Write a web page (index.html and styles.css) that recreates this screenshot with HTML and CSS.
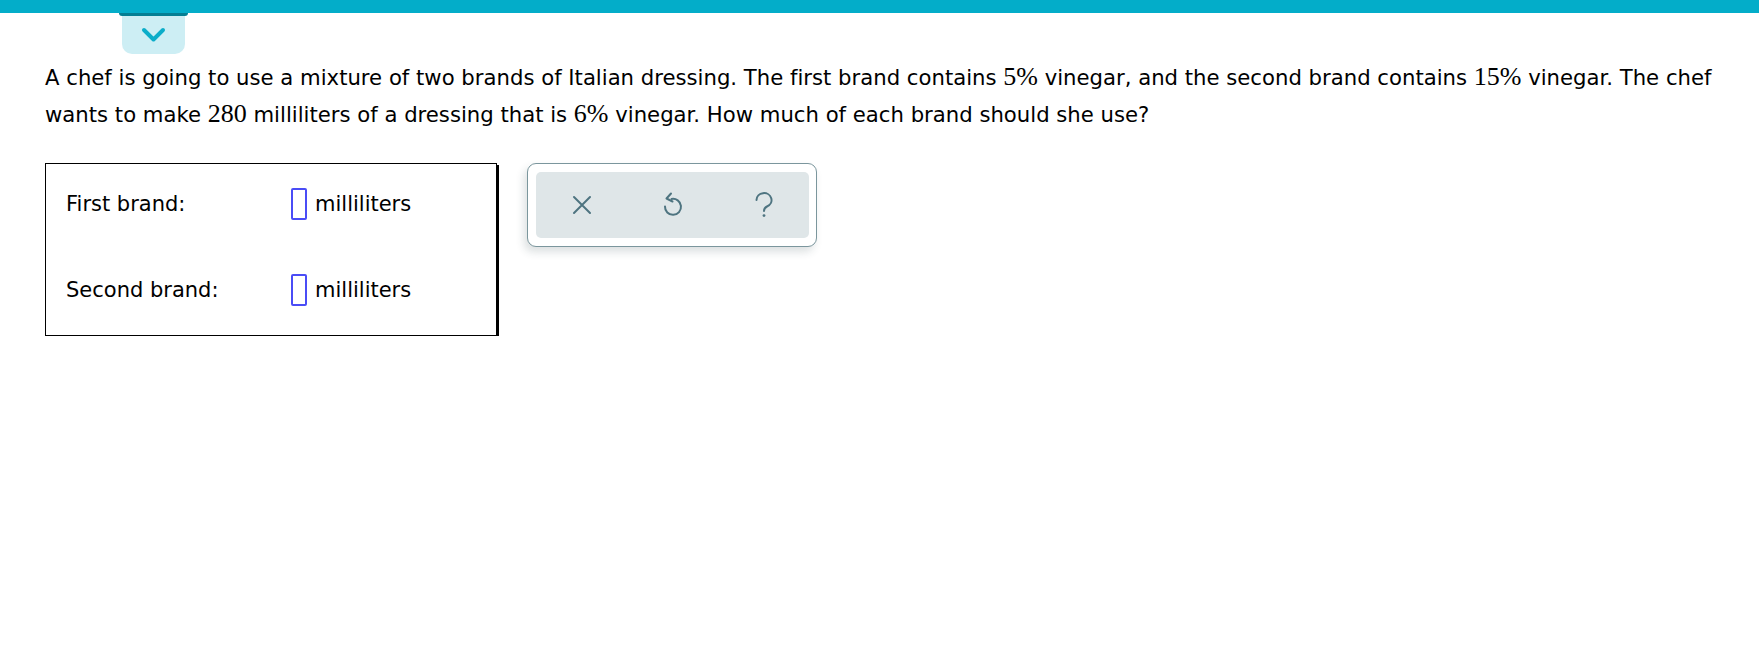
FILE: index.html
```html
<!DOCTYPE html>
<html lang="en">
<head>
<meta charset="utf-8">
<title>Mixture problem</title>
<link rel="stylesheet" href="styles.css">
</head>
<body>
<div class="topbar"></div>
<div class="tab-wrap">
  <div class="tab-lip"></div>
  <div class="tab">
    <svg class="chev" width="25" height="17" viewBox="0 0 25 17"><path d="M3 3 L12.5 12.5 L22 3" fill="none" stroke="#0badc9" stroke-width="4" stroke-linecap="round" stroke-linejoin="round"/></svg>
  </div>
</div>
<main class="content">
  <p class="question">A chef is going to use a mixture of two brands of Italian dressing. The first brand contains <span class="m">5%</span> vinegar, and the second brand contains <span class="m">15%</span> vinegar. The chef wants to make <span class="m">280</span> milliliters of a dressing that is <span class="m">6%</span> vinegar. How much of each brand should she use?</p>
  <div class="answer-area">
    <div class="answer-box">
      <div class="row">
        <span class="label">First brand:</span>
        <span class="input"></span>
        <span class="unit">milliliters</span>
      </div>
      <div class="row">
        <span class="label">Second brand:</span>
        <span class="input"></span>
        <span class="unit">milliliters</span>
      </div>
    </div>
    <div class="toolbar">
      <div class="toolbar-inner">
        <button class="tool" aria-label="Clear">
          <svg width="20" height="20" viewBox="0 0 20 20"><path d="M2 2 L18 18 M18 2 L2 18" fill="none" stroke="#4e7480" stroke-width="2" stroke-linecap="round"/></svg>
        </button>
        <button class="tool" aria-label="Undo">
          <svg width="22" height="26" viewBox="0 0 22 26"><path d="M9.5 7 A8 8 0 1 1 3 14.5" fill="none" stroke="#4e7480" stroke-width="2" stroke-linecap="round"/><path d="M9 1.5 L4.5 6.5 L10.5 9.5" fill="none" stroke="#4e7480" stroke-width="2" stroke-linecap="round" stroke-linejoin="round"/></svg>
        </button>
        <button class="tool" aria-label="Help">
          <svg width="20" height="26" viewBox="0 0 20 26"><path d="M2.5 8 A7.5 7 0 1 1 13 14.5 C11 15.6 10 16.6 10 19" fill="none" stroke="#4e7480" stroke-width="2" stroke-linecap="round"/><circle cx="10" cy="23.6" r="1.4" fill="#4e7480"/></svg>
        </button>
      </div>
    </div>
  </div>
</main>
</body>
</html>
```
FILE: styles.css
```css
html, body {
  margin: 0;
  padding: 0;
  background: #ffffff;
}

body {
  font-family: "DejaVu Sans", Verdana, sans-serif;
  color: #000000;
  font-variant-ligatures: none;
}

.topbar {
  height: 13px;
  background: #03adc9;
}

.tab-wrap {
  margin-left: 119px;
  width: 69px;
  display: flex;
  flex-direction: column;
  align-items: center;
}

.tab-lip {
  width: 69px;
  height: 3px;
  background: #047e93;
  border-radius: 0 0 3px 3px;
}

.tab {
  width: 63px;
  height: 38px;
  background: #cdeef4;
  border-radius: 0 0 10px 10px;
  display: flex;
  align-items: center;
  justify-content: center;
}

.chev {
  display: block;
  margin-top: 1px;
}

.content {
  padding: 0 28px 0 45px;
}

.question {
  margin: 5px 0 0 0;
  font-size: 21.2px;
  line-height: 37px;
}

.m {
  font-family: "Liberation Serif", "Times New Roman", serif;
  font-size: 26px;
  line-height: 1;
}

.answer-area {
  margin-top: 30px;
  display: flex;
  align-items: flex-start;
  gap: 30px;
}

.answer-box {
  box-sizing: border-box;
  width: 452px;
  height: 173px;
  border: 1px solid #000;
  box-shadow: 2px 2px 0 #000;
  padding: 24px 0 0 20px;
  display: flex;
  flex-direction: column;
  gap: 54px;
  font-size: 21px;
}

.row {
  display: flex;
  align-items: center;
  height: 32px;
  line-height: 32px;
}

.label {
  width: 225px;
  flex: none;
}

.input {
  width: 16px;
  height: 32px;
  box-sizing: border-box;
  border: 2px solid #4a4cf6;
  border-radius: 2px;
  flex: none;
}

.unit {
  margin-left: 8px;
}

.toolbar {
  width: 290px;
  height: 84px;
  box-sizing: border-box;
  border: 1px solid #7b969d;
  border-radius: 9px;
  background: #ffffff;
  padding: 8px 7px 8px 8px;
  box-shadow: -3px 5px 9px rgba(40, 60, 70, 0.16);
}

.toolbar-inner {
  height: 66px;
  background: #dfe6e8;
  border-radius: 5px;
  display: flex;
}

.tool {
  flex: 1;
  border: none;
  background: transparent;
  padding: 0;
  display: flex;
  align-items: center;
  justify-content: center;
}

.tool svg {
  display: block;
}
```
